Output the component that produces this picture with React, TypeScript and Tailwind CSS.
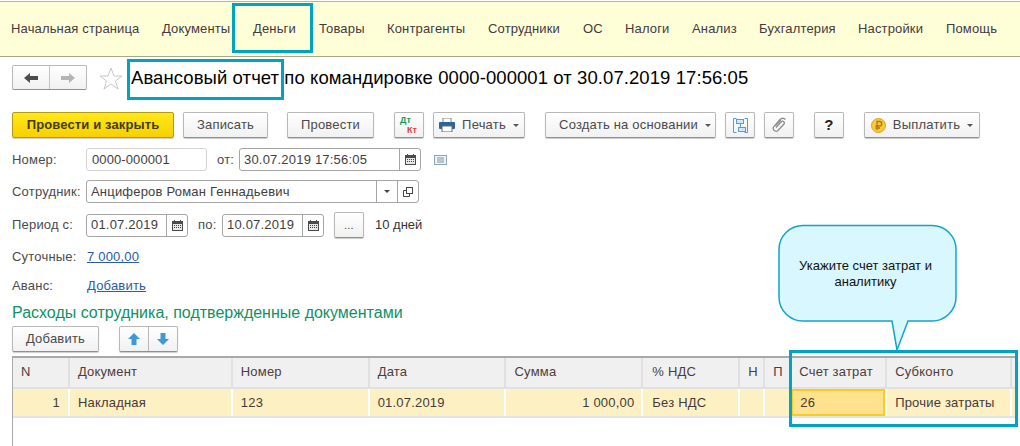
import type { ReactNode } from 'react';

const navItems = [
  { label: 'Начальная страница', className: 'ml-[11px] w-[151px]' },
  { label: 'Документы', className: 'w-[91px]' },
  { label: 'Деньги', className: 'w-[66px]' },
  { label: 'Товары', className: 'w-[68px]' },
  { label: 'Контрагенты', className: 'w-[101px]' },
  { label: 'Сотрудники', className: 'w-[95px]' },
  { label: 'ОС', className: 'w-[42px]' },
  { label: 'Налоги', className: 'w-[67px]' },
  { label: 'Анализ', className: 'w-[67px]' },
  { label: 'Бухгалтерия', className: 'w-[99px]' },
  { label: 'Настройки', className: 'w-[88px]' },
  { label: 'Помощь', className: '' },
];

function Btn({ className = '', children }: { className?: string; children: ReactNode }) {
  return (
    <div
      className={`h-[26px] flex items-center justify-center rounded-[2px] border border-[#b8b8b8] border-b-[#8f8f8f] bg-gradient-to-b from-white to-[#f1f1f1] shadow-[0_1px_1px_rgba(0,0,0,0.2)] text-[13px] text-[#4a4a4a] tracking-[0.2px] ${className}`}
    >
      {children}
    </div>
  );
}

function Caret() {
  return <span className="inline-block ml-[7px] w-0 h-0 border-x-[3px] border-x-transparent border-t-[3px] border-t-[#555]" />;
}

function CalendarIcon() {
  return (
    <svg width="13" height="13" viewBox="0 0 13 13">
      <rect x="1" y="2" width="11" height="10" fill="#4a4a4a" />
      <rect x="3" y="1" width="1" height="2" fill="#4a4a4a" />
      <rect x="9" y="1" width="1" height="2" fill="#4a4a4a" />
      <rect x="2" y="5" width="9" height="6" fill="#e8e8e8" />
      <path d="M3 6h1v1H3zM5 6h1v1H5zM7 6h1v1H7zM9 6h1v1H9zM3 8h1v1H3zM5 8h1v1H5zM7 8h1v1H7zM9 8h1v1H9z" fill="#444" />
    </svg>
  );
}

function Field({ className = '', value, suffixes }: { className?: string; value: string; suffixes: ReactNode[] }) {
  return (
    <div className={`h-[23px] flex items-stretch rounded-[3px] border border-[#a5a5a5] bg-white ${className}`}>
      <div className="flex-1 flex items-center pl-[4px] text-[13px] text-[#3e3e3e] tracking-[0.2px]">{value}</div>
      {suffixes.map((s, i) => (
        <div key={i} className="w-[21px] flex items-center justify-center border-l border-[#a5a5a5]">
          {s}
        </div>
      ))}
    </div>
  );
}

function Label({ children, className = 'w-[74px]' }: { children: ReactNode; className?: string }) {
  return <div className={`text-[13px] text-[#4a4a4a] tracking-[0.2px] ${className}`}>{children}</div>;
}

const columns = [
  { title: 'N', value: '1', w: 'w-[57px]', valueClass: 'justify-end pr-[8px]', headClass: 'pl-[8px]' },
  { title: 'Документ', value: 'Накладная', w: 'w-[163px]', valueClass: 'pl-[8px]', headClass: 'pl-[8px]' },
  { title: 'Номер', value: '123', w: 'w-[137px]', valueClass: 'pl-[8px]', headClass: 'pl-[8px]' },
  { title: 'Дата', value: '01.07.2019', w: 'w-[136px]', valueClass: 'pl-[8px]', headClass: 'pl-[8px]' },
  { title: 'Сумма', value: '1 000,00', w: 'w-[138px]', valueClass: 'justify-end pr-[7px]', headClass: 'pl-[9px]' },
  { title: '% НДС', value: 'Без НДС', w: 'w-[97px]', valueClass: 'pl-[9px]', headClass: 'pl-[9px]' },
  { title: 'Н', value: '', w: 'w-[25px]', valueClass: '', headClass: 'pl-[8px]' },
  { title: 'П', value: '', w: 'w-[26px]', valueClass: '', headClass: 'pl-[8px]' },
  { title: 'Счет затрат', value: '26', w: 'w-[96px]', valueClass: 'pl-[7px] bg-[#fee28e] border-2 border-[#fbcb22]', headClass: 'pl-[8px]' },
  { title: 'Субконто', value: 'Прочие затраты', w: 'w-[125px]', valueClass: 'pl-[8px]', headClass: 'pl-[8px]' },
  { title: '', value: '', w: 'w-[5px]', valueClass: '', headClass: '' },
];

export default function App() {
  return (
    <div className="relative w-[1020px] h-[446px] overflow-hidden bg-white font-['Liberation_Sans',Arial,sans-serif]">
      {/* Sections bar */}
      <div className="mt-px h-[56px] flex items-center bg-[#ffffd7] border-t border-b border-t-[#c9b56e] border-b-[#a9a784] text-[13px] text-[#43393f] tracking-[0.15px] whitespace-nowrap">
        {navItems.map((item) => (
          <div key={item.label} className={item.className}>
            {item.label}
          </div>
        ))}
      </div>

      {/* Title row */}
      <div className="mt-2 ml-3 h-[25px] flex items-center">
        <div className="w-[75px] h-[25px] flex rounded-[2px] border border-[#b8b8b8] border-b-[#8f8f8f] bg-gradient-to-b from-white to-[#f1f1f1]">
          <div className="flex-1 flex items-center justify-center border-r border-[#c4c4c4]">
            <svg width="14" height="10" viewBox="0 0 14 10">
              <path d="M0 5L6 0v3h8v4H6v3z" fill="#4d4d4d" />
            </svg>
          </div>
          <div className="flex-1 flex items-center justify-center">
            <svg width="14" height="10" viewBox="0 0 14 10">
              <path d="M14 5L8 0v3H0v4h8v3z" fill="#b4b4b4" />
            </svg>
          </div>
        </div>
        <svg className="ml-[12px] mt-[1px]" width="24" height="23" viewBox="0 0 24 23">
          <path d="M12 1l3 8h8l-6.500 5 2.500 8-7-5-7 5 2.500-8L1 9h8z" fill="#fff" stroke="#c6c6c6" />
        </svg>
        <div className="ml-[8px] text-[18.5px] tracking-[0.08px] text-black whitespace-nowrap">Авансовый отчет по командировке 0000-000001 от 30.07.2019 17:56:05</div>
      </div>

      {/* Command bar */}
      <div className="mt-[22px] ml-3 flex items-center whitespace-nowrap">
        <div className="w-[162px] h-[26px] flex items-center justify-center rounded-[2px] border border-[#b39c10] bg-gradient-to-b from-[#ffe81a] to-[#f8d000] shadow-[0_1px_1px_rgba(0,0,0,0.2)] text-[13px] font-bold text-[#403c1a] tracking-[0.13px]">
          Провести и закрыть
        </div>
        <Btn className="ml-[9px] w-[85px]">Записать</Btn>
        <Btn className="ml-[19px] w-[87px]">Провести</Btn>
        <Btn className="ml-[20px] w-[30px]">
          <div className="relative w-[18px] h-[16px] text-[9px] leading-[10px] font-bold tracking-normal">
            <span className="absolute left-0 -top-[2px] text-[#1b9a55]">Дт</span>
            <span className="absolute left-[7px] top-[8px] text-[#e0403c]">Кт</span>
          </div>
        </Btn>
        <Btn className="ml-[9px] w-[92px]">
          <svg className="mr-[7px]" width="16" height="14" viewBox="0 0 16 14">
            <rect x="4" y="0" width="8" height="5" fill="#fff" stroke="#7a8a99" />
            <rect x="0" y="4" width="16" height="7" rx="1" fill="#2f6497" />
            <rect x="3" y="8" width="10" height="6" fill="#fff" stroke="#5c6b7a" />
          </svg>
          Печать
          <Caret />
        </Btn>
        <Btn className="ml-[20px] w-[171px] pl-[9px]">
          Создать на основании
          <Caret />
        </Btn>
        <Btn className="ml-[9px] w-[30px]">
          <svg width="15" height="15" viewBox="0 0 15 15" fill="none">
            <path d="M3.500.5H.5v14h3M11.500.5h3v14h-3" stroke="#5b9cc9" />
            <rect x="3.500" y="1.500" width="7" height="4" fill="#d3e6f3" stroke="#5b9cc9" />
            <rect x="5.500" y="9.500" width="7" height="4" fill="#d3e6f3" stroke="#5b9cc9" />
            <path d="M7.500 5.500v4" stroke="#5b9cc9" />
          </svg>
        </Btn>
        <Btn className="ml-[9px] w-[30px]">
          <svg width="16" height="16" viewBox="0 0 16 16" fill="none" stroke="#8c8c8c" strokeWidth="1.300">
            <path d="M5 10.500l5.500-6a1.800 1.800 0 012.500 2.500L6.500 14a3 3 0 01-4-4l6.500-7.500a4 4 0 015.500 0" />
            <path d="M4.500 8.500L10 3" />
          </svg>
        </Btn>
        <Btn className="ml-[20px] w-[30px]">
          <span className="text-[15px] font-bold text-[#222]">?</span>
        </Btn>
        <Btn className="ml-[20px] w-[116px]">
          <svg className="mr-[7px]" width="15" height="15" viewBox="0 0 15 15">
            <circle cx="7.500" cy="7.500" r="7" fill="#f6cb3a" stroke="#dca41c" />
            <path d="M6 12V3.500h2.500a2 2 0 010 4.500H4.500M4.500 10H9" fill="none" stroke="#b5761a" strokeWidth="1.300" />
          </svg>
          Выплатить
          <Caret />
        </Btn>
      </div>

      {/* Header fields */}
      <div className="mt-[10px] ml-3 h-[23px] flex items-center whitespace-nowrap">
        <Label>Номер:</Label>
        <div className="w-[121px] h-[23px] flex items-center pl-[5px] rounded-[3px] border border-[#d4d4d4] text-[13px] text-[#3e3e3e] tracking-[0.1px]">0000-000001</div>
        <Label className="ml-[10px] w-[22px]">от:</Label>
        <Field className="w-[182px]" value="30.07.2019 17:56:05" suffixes={[<CalendarIcon key="cal" />]} />
        <svg className="ml-[13px]" width="13" height="10" viewBox="0 0 13 10">
          <rect x="0.500" y="0.500" width="12" height="9" fill="#eef2f6" stroke="#8fa5ba" />
          <path d="M3 3h7M3 5h7M3 7h7" stroke="#7f95aa" />
        </svg>
      </div>

      <div className="mt-[9px] ml-3 h-[23px] flex items-center whitespace-nowrap">
        <Label>Сотрудник:</Label>
        <Field
          className="w-[333px]"
          value="Анциферов Роман Геннадьевич"
          suffixes={[
            <span key="c" className="w-0 h-0 border-x-[3px] border-x-transparent border-t-[3px] border-t-[#444]" />,
            <svg key="o" width="10" height="10" viewBox="0 0 10 10" fill="none" stroke="#444">
              <rect x="3.500" y="0.500" width="6" height="6" />
              <path d="M3 3.500H.5v6h6V7" />
            </svg>,
          ]}
        />
      </div>

      <div className="mt-[9px] ml-3 h-[26px] flex items-center whitespace-nowrap">
        <Label>Период с:</Label>
        <Field className="w-[102px]" value="01.07.2019" suffixes={[<CalendarIcon key="cal" />]} />
        <Label className="ml-[10px] w-[24px]">по:</Label>
        <Field className="w-[102px]" value="10.07.2019" suffixes={[<CalendarIcon key="cal" />]} />
        <Btn className="ml-[10px] w-[30px]">
          <span className="text-[11px]">...</span>
        </Btn>
        <div className="ml-[11px] text-[13px] text-[#333]">10 дней</div>
      </div>

      <div className="mt-[9px] ml-3 h-[20px] flex items-center whitespace-nowrap">
        <Label className="w-[75px]">Суточные:</Label>
        <div className="text-[13px] text-[#2a5aa8] underline tracking-[0.2px]">7 000,00</div>
      </div>

      <div className="mt-[9px] ml-3 h-[20px] flex items-center whitespace-nowrap">
        <Label className="w-[75px]">Аванс:</Label>
        <div className="text-[13px] text-[#2a5aa8] underline tracking-[0.2px]">Добавить</div>
      </div>

      <div className="mt-[7px] ml-3 h-[20px] flex items-center text-[16px] text-[#0f9166] whitespace-nowrap">
        Расходы сотрудника, подтвержденные документами
      </div>

      {/* Table toolbar */}
      <div className="mt-[3px] ml-3 flex items-center">
        <Btn className="w-[87px]">Добавить</Btn>
        <div className="ml-[20px] w-[59px] h-[26px] flex rounded-[2px] border border-[#b8b8b8] border-b-[#8f8f8f] bg-gradient-to-b from-white to-[#f1f1f1] shadow-[0_1px_1px_rgba(0,0,0,0.2)]">
          <div className="flex-1 flex items-center justify-center border-r border-[#b8b8b8]">
            <svg width="12" height="12" viewBox="0 0 12 12">
              <path d="M6 0l6 6H8.500v6h-5V6H0z" fill="#3d9ad6" />
            </svg>
          </div>
          <div className="flex-1 flex items-center justify-center">
            <svg width="12" height="12" viewBox="0 0 12 12">
              <path d="M6 12L0 6h3.500V0h5v6H12z" fill="#3d9ad6" />
            </svg>
          </div>
        </div>
      </div>

      {/* Expense table */}
      <div className="mt-[4px] ml-3 h-[90px] w-[1005px] border-t-2 border-l border-[#a9a9a9]">
        <div className="h-[31px] flex border-b-2 border-[#e0e0e0]">
          {columns.map((c, i) => (
            <div key={i} className={`${c.w} flex items-center pb-px bg-[#f0f0f0] border-r-2 border-[#e0e0e0] text-[13px] text-[#4d3c3c] tracking-[0.2px] whitespace-nowrap ${c.headClass}`}>
              {c.title}
            </div>
          ))}
        </div>
        <div className="h-[29px] flex border-b-2 border-[#e4e4e4]">
          {columns.map((c, i) => (
            <div key={i} className={`${c.w} border-r-2 border-white bg-[#fdf1c3]`}>
              <div className={`h-full flex items-center text-[13px] text-[#453a3a] tracking-[0.2px] whitespace-nowrap ${c.valueClass}`}>{c.value}</div>
            </div>
          ))}
        </div>
      </div>

      {/* Annotations */}
      <div className="absolute left-[232px] top-[3px] w-[81px] h-[50px] border-[3px] border-[#00a3c2]" />
      <div className="absolute left-[127px] top-[59px] w-[157px] h-[41px] border-[3px] border-[#00a3c2]" />
      <div className="absolute left-[789px] top-[350px] w-[229px] h-[77px] border-[3px] border-[#00a3c2]" />

      <svg className="absolute left-[775px] top-[222px]" width="190" height="132" viewBox="0 0 190 132">
        <path
          d="M28 3.500H157a24 24 0 0124 24V75a24 24 0 01-24 24H133L122 128 117 99H28a24 24 0 01-24-24V27.500a24 24 0 0124-24z"
          fill="#d9f7ff"
          stroke="#12a5c6"
          strokeWidth="1.500"
        />
      </svg>
      <div className="absolute left-[783px] top-[258px] w-[165px] text-center text-[13px] leading-[16px] text-[#111]">
        Укажите счет затрат и аналитику
      </div>
    </div>
  );
}
